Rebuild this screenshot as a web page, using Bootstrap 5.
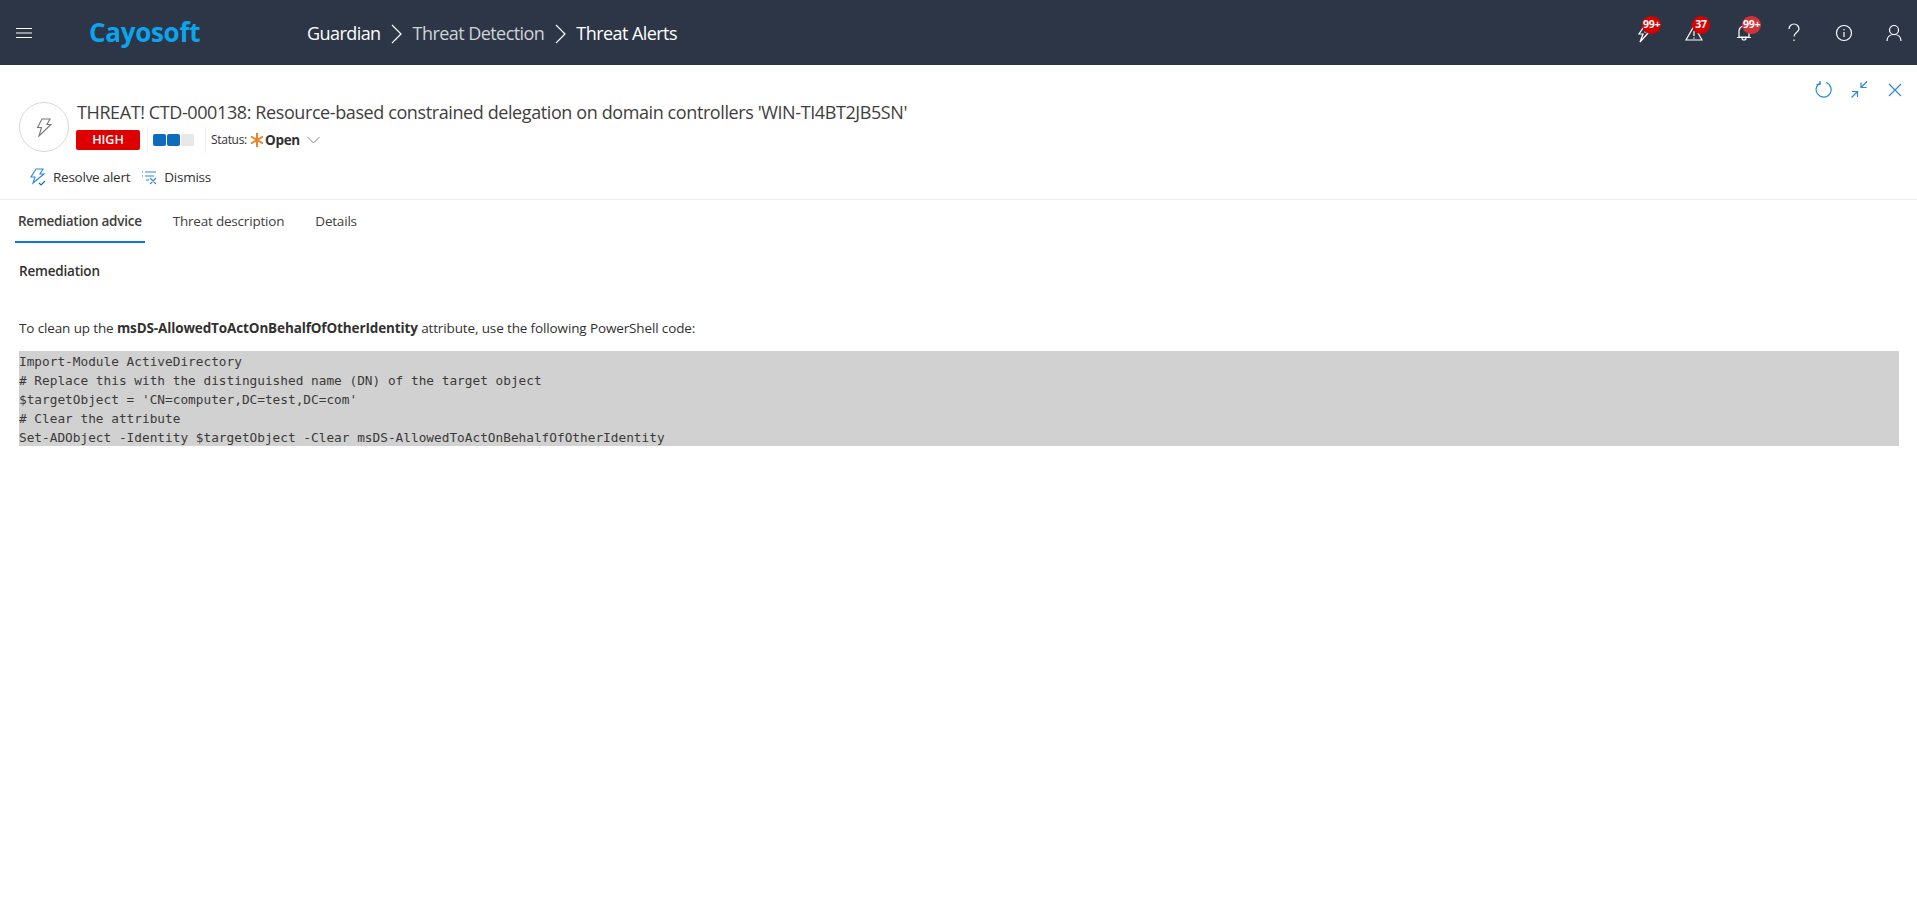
<!DOCTYPE html>
<html lang="en">
<head>
<meta charset="utf-8">
<title>Threat Alerts</title>
<link rel="stylesheet" href="https://cdn.jsdelivr.net/npm/bootstrap@5.3.0/dist/css/bootstrap.min.css">
<style>
html,body{height:100%;background:#fff}
body{font-family:"Open Sans","Noto Sans",sans-serif;font-size:13.5px;color:#323130;letter-spacing:-.13px;overflow:hidden}
.top-bar{height:65px;background:#2d3646;color:#fff;padding:0}
.burger{width:16px;margin-left:16px;margin-right:57px;color:#fff}
.brand-word{font-size:26px;font-weight:700;color:#0aa5ee;width:218px;letter-spacing:-.3px;line-height:1;padding-bottom:1px}
.crumbs{font-size:18px;gap:9.5px;letter-spacing:-.56px;padding-top:2px}
.crumb-dim{color:#cfd2d6}
.top-icons{gap:4px}
.top-ico{width:46px;height:40px;position:relative;display:flex;align-items:center;justify-content:center}
.top-ico .count{position:absolute;top:3px;left:21px;min-width:18px;height:18px;padding:0 1px;border-radius:9px;background:#d90000;color:#fff;font-size:10.5px;font-weight:700;line-height:17px;text-align:center;letter-spacing:-.3px}
.top-ico .count.soft{background:#d13438}
.tools{position:absolute;top:81px;right:4px;gap:0;color:#2b88d8}
.tool-btn{width:36px;display:flex;justify-content:center}
.head-pad{padding:36px 19px 0 19px}
.round-ico{width:50px;height:50px;border:1px solid #d8d8d8;border-radius:50%;margin-right:8px;margin-top:1px}
.threat-title{font-size:18px;line-height:24px;margin:-1px 0 0;font-weight:400;color:#3f3e3d;letter-spacing:-.4px}
.meta-row{height:26px;margin-top:3px}
.sev-tag{width:64px;height:20px;border-radius:2px;background:#de0000;color:#fff;font-size:12.5px;font-weight:600;line-height:20px;text-align:center;letter-spacing:0;margin-left:-1px}
.v-sep{width:1px;height:26px;background:#eee}
.sep-a{margin:0 5px 0 7px}
.sep-b{margin:0 5px 0 10px}
.pip{width:13px;height:12px;border-radius:2px;background:#0f6cbd;margin-right:1px}
.pip.off{background:#e8e8e8}
.stat-l{font-size:12px;color:#323130;letter-spacing:-.3px}
.stat-star{margin:0 1px 0 3px}
.stat-v{font-size:13.5px;font-weight:700;letter-spacing:-.3px}
.stat-chev{margin-left:7px}
.act-row{height:30px;margin:9px 0 0 11px;gap:11px}
.act-row .gap-act{gap:7px}
.act-row span{font-size:13.5px;letter-spacing:-.25px}
.rule-line{height:1px;background:#eee;margin-top:7px}
.tab-row{height:43px;padding-left:15px;gap:25px}
.tab-i{height:43px;display:flex;align-items:center;padding:2px 3px 0;border-bottom:2px solid transparent;color:#3f3e3d;letter-spacing:-.2px}
.tab-i.on{font-weight:600;border-bottom-color:#0f78d4;letter-spacing:-.25px}
.pane{padding:0 18px 0 19px}
.pane-h{font-size:13.5px;font-weight:600;margin:0;line-height:18px;padding-top:19px;letter-spacing:-.2px}
.pane-p{margin:39px 0 0;line-height:18px}
.code-box{margin:14px 0 0;background:#d1d1d1;font-family:"DejaVu Sans Mono","Liberation Mono",monospace;font-size:12.78px;line-height:19px;height:95px;padding:1px 0 0;color:#3b3a39;letter-spacing:0;overflow:hidden}
</style>
</head>
<body>
<nav class="top-bar d-flex align-items-center position-relative">
  <svg class="burger" viewBox="0 0 16 10" height="10" fill="none" stroke="currentColor" stroke-width="1"><path d="M0 .5h16M0 5h16M0 9.500h16"/></svg>
  <div class="brand-word">Cayosoft</div>
  <div class="crumbs d-flex align-items-center">
    <span>Guardian</span>
    <svg width="13" height="22" viewBox="0 0 13 22" fill="none" stroke="#fff" stroke-width="1.200"><path d="M2 2l9 9-9 9"/></svg>
    <span class="crumb-dim">Threat Detection</span>
    <svg width="13" height="22" viewBox="0 0 13 22" fill="none" stroke="#fff" stroke-width="1.200"><path d="M2 2l9 9-9 9"/></svg>
    <span>Threat Alerts</span>
  </div>
  <div class="top-icons d-flex ms-auto">
    <div class="top-ico"><svg width="20" height="22" viewBox="0 0 20 22" fill="none" stroke="#fff" stroke-width="1.200"><path d="M11 3L5 12h4l-3 8 9-10h-4l3-7"/></svg><span class="count">99+</span></div>
    <div class="top-ico"><svg width="18" height="18" viewBox="0 0 18 18" fill="none" stroke="#fff" stroke-width="1.200"><path d="M9 2l8 14H1z"/><path d="M9 7v5M9 13.500v1.200"/></svg><span class="count">37</span></div>
    <div class="top-ico"><svg width="18" height="20" viewBox="0 0 18 20" fill="none" stroke="#fff" stroke-width="1.200"><path d="M4 14V8a5 5 0 0110 0v6zM2 14.500h14M7 15a2 2 0 004 0"/></svg><span class="count soft">99+</span></div>
    <div class="top-ico"><svg width="14" height="20" viewBox="0 0 14 20" fill="none" stroke="#fff" stroke-width="1.200"><path d="M2 6a5 5 0 1110 0c0 3-5 3.500-5 7.500M7 16.500v1.500"/></svg></div>
    <div class="top-ico"><svg width="18" height="18" viewBox="0 0 18 18" fill="none" stroke="#fff" stroke-width="1.200"><circle cx="9" cy="9" r="7.500"/><path d="M9 8v5M9 5v1.300"/></svg></div>
    <div class="top-ico"><svg width="18" height="18" viewBox="0 0 18 18" fill="none" stroke="#fff" stroke-width="1.200"><circle cx="9" cy="6" r="4.500"/><path d="M2 17c0-4 3-6.500 7-6.500s7 2.500 7 6.500"/></svg></div>
  </div>
</nav>

<div class="tools d-flex align-items-center">
  <div class="tool-btn"><svg width="17" height="17" viewBox="0 0 17 17" fill="none" stroke="currentColor" stroke-width="1.200"><path d="M5.500 1.800A7.500 7.500 0 1 0 11 1.500"/><path d="M5 0v3.500h-3.500"/></svg></div>
  <div class="tool-btn"><svg width="17" height="17" viewBox="0 0 17 17" fill="none" stroke="currentColor" stroke-width="1.200"><path d="M16 .5l-6 6M10 1.500v5h5.500M.5 16.500l6-6M1 10.500h5.500V16"/></svg></div>
  <div class="tool-btn"><svg width="14" height="14" viewBox="0 0 14 14" fill="none" stroke="currentColor" stroke-width="1.200"><path d="M1 1l12 12M13 1L1 13"/></svg></div>
</div>

<div class="head-pad">
  <div class="d-flex">
    <div class="round-ico d-flex align-items-center justify-content-center flex-shrink-0">
      <svg width="16" height="19" viewBox="0 0 16 19" fill="none" stroke="#767676" stroke-width="1.100"><path d="M6 1h8l-3 5.500h4L3 18l2.500-8.500H1.500z"/></svg>
    </div>
    <div>
      <h1 class="threat-title">THREAT! CTD-000138: Resource-based constrained delegation on domain controllers 'WIN-TI4BT2JB5SN'</h1>
      <div class="meta-row d-flex align-items-center">
        <div class="sev-tag">HIGH</div>
        <div class="v-sep sep-a"></div>
        <div class="d-flex"><div class="pip"></div><div class="pip"></div><div class="pip off"></div></div>
        <div class="v-sep sep-b"></div>
        <span class="stat-l">Status:</span>
        <svg class="stat-star" width="14" height="14" viewBox="0 0 14 14" stroke="#e8842c" stroke-width="2"><path d="M7 0v14M1 3.500l12 7M13 3.500l-12 7"/></svg>
        <span class="stat-v">Open</span>
        <svg class="stat-chev" width="13" height="8" viewBox="0 0 13 8" fill="none" stroke="#8a8886"><path d="M.5 1l6 6 6-6"/></svg>
      </div>
    </div>
  </div>
  <div class="act-row d-flex align-items-center">
    <div class="d-flex align-items-center gap-act">
      <svg width="16" height="18" viewBox="0 0 16 18" fill="none" stroke="#2b88d8" stroke-width="1.100"><path d="M6 1h7l-3 5h4L3 15l2-6H1z"/><path d="M9 15l2 2 4-4" stroke="#0f6cbd"/></svg>
      <span>Resolve alert</span>
    </div>
    <div class="d-flex align-items-center gap-act">
      <svg width="16" height="16" viewBox="0 0 16 16" fill="none" stroke="#2b88d8" stroke-width="1.100"><path d="M4 3h11M1 3h1M4 7h9M1 7h1M5 11h3M9 9l6 6M15 9l-6 6"/></svg>
      <span>Dismiss</span>
    </div>
  </div>
</div>
<div class="rule-line"></div>
<div class="tab-row d-flex">
  <div class="tab-i on">Remediation advice</div>
  <div class="tab-i">Threat description</div>
  <div class="tab-i">Details</div>
</div>
<main class="pane">
  <h2 class="pane-h">Remediation</h2>
  <p class="pane-p">To clean up the <b>msDS-AllowedToActOnBehalfOfOtherIdentity</b> attribute, use the following PowerShell code:</p>
  <pre class="code-box">Import-Module ActiveDirectory
# Replace this with the distinguished name (DN) of the target object
$targetObject = 'CN=computer,DC=test,DC=com'
# Clear the attribute
Set-ADObject -Identity $targetObject -Clear msDS-AllowedToActOnBehalfOfOtherIdentity</pre>
</main>
<script src="https://cdn.jsdelivr.net/npm/bootstrap@5.3.0/dist/js/bootstrap.bundle.min.js"></script>
</body>
</html>
